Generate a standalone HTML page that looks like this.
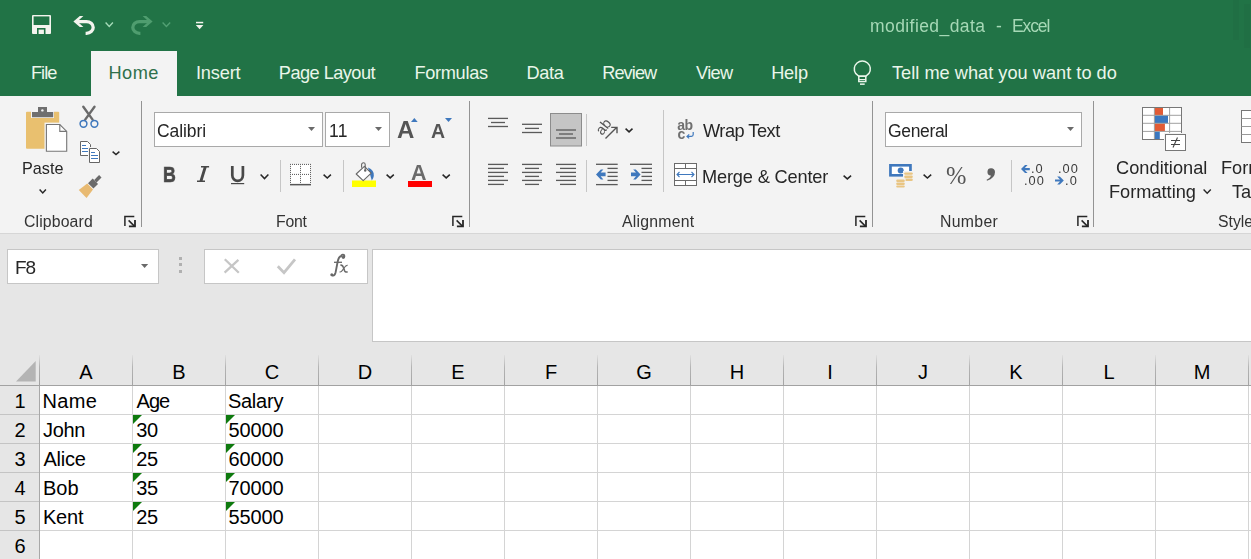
<!DOCTYPE html>
<html><head><meta charset="utf-8"><style>
html,body{margin:0;padding:0}
body{width:1251px;height:559px;overflow:hidden;position:relative;font-family:"Liberation Sans", sans-serif;background:#fff}
body>div,body>svg{position:absolute}
.t{white-space:nowrap;will-change:transform}
svg{overflow:visible}
</style></head><body>
<div style="left:0px;top:0px;width:1251px;height:96px;background:#217346"></div><svg style="left:31px;top:14px;" width="22" height="22" viewBox="31 14 22 22"><rect x="32" y="15" width="19" height="19" rx="1" fill="#f4f4ee"/><rect x="33.6" y="16.4" width="15.8" height="8.6" fill="#217346"/><rect x="37" y="28" width="8.5" height="6" fill="#217346"/><rect x="38.6" y="29.6" width="5.3" height="4.4" fill="#f4f4ee"/></svg><svg style="left:70px;top:12px;" width="30" height="26" viewBox="70 12 30 26"><path d="M73.4 21.5 L79.8 15.9 H83.4 L79 20 V23 L83.4 27.1 H79.8 Z" fill="#f4f4ee"/><path d="M78 21.6 H86.5 A6.7 5.85 0 0 1 86.5 33.3 H85.6" stroke="#f4f4ee" stroke-width="3.3" fill="none"/></svg><svg style="left:103px;top:20px;" width="12.5" height="9" viewBox="103 20 12.5 9"><path d="M105.6 22.6 L109.25 26.4 L112.9 22.6" stroke="#a6dcb9" stroke-width="1.4" fill="none"/></svg><svg style="left:128px;top:12px;" width="30" height="26" viewBox="128 12 30 26"><path d="M152.6 21.5 L146.2 15.9 H142.6 L147 20 V23 L142.6 27.1 H146.2 Z" fill="#4f9d6f"/><path d="M148 21.6 H139.5 A6.7 5.85 0 0 0 139.5 33.3 H140.4" stroke="#4f9d6f" stroke-width="3.3" fill="none"/></svg><svg style="left:160px;top:20px;" width="12.800000000000011" height="9" viewBox="160 20 12.800000000000011 9"><path d="M162.6 22.6 L166.4 26.4 L170.20000000000002 22.6" stroke="#52a073" stroke-width="1.4" fill="none"/></svg><svg style="left:194px;top:19px;" width="12" height="12" viewBox="194 19 12 12"><rect x="196" y="21.8" width="7.2" height="1.5" fill="#f4f4ee"/><path d="M195.8 25 H203.4 L199.6 29.2 Z" fill="#f4f4ee"/></svg><div class="t" id="title" style="left:870.20px;top:17.69px;font-size:17.5px;line-height:17.5px;color:#a6d8b6;letter-spacing:0.417px;">modified_data</div><div class="t" id="title2" style="left:996.00px;top:17.69px;font-size:17.5px;line-height:17.5px;color:#a6d8b6;">-</div><div class="t" id="title3" style="left:1012.20px;top:17.69px;font-size:17.5px;line-height:17.5px;color:#a6d8b6;letter-spacing:-1.125px;">Excel</div><div style="left:1233px;top:0px;width:6px;height:40px;background:#1f6d43;opacity:.6"></div><div style="left:1244px;top:4px;width:6px;height:44px;background:#1f6d43;opacity:.6"></div><div style="left:91px;top:51px;width:86px;height:45px;background:#f3f3f3"></div><div class="t" id="tab0" style="left:31.00px;top:64.09px;font-size:18.2px;line-height:18.2px;color:#eaf6ea;letter-spacing:-1.000px;will-change:auto">File</div><div class="t" id="tab1" style="left:108.40px;top:64.09px;font-size:18.2px;line-height:18.2px;color:#2f704b;letter-spacing:0.500px;will-change:auto">Home</div><div class="t" id="tab2" style="left:196.00px;top:64.09px;font-size:18.2px;line-height:18.2px;color:#eaf6ea;letter-spacing:-0.180px;will-change:auto">Insert</div><div class="t" id="tab3" style="left:278.80px;top:64.09px;font-size:18.2px;line-height:18.2px;color:#eaf6ea;letter-spacing:-0.540px;will-change:auto">Page Layout</div><div class="t" id="tab4" style="left:414.40px;top:64.09px;font-size:18.2px;line-height:18.2px;color:#eaf6ea;letter-spacing:-0.300px;will-change:auto">Formulas</div><div class="t" id="tab5" style="left:526.40px;top:64.09px;font-size:18.2px;line-height:18.2px;color:#eaf6ea;letter-spacing:-0.333px;will-change:auto">Data</div><div class="t" id="tab6" style="left:602.20px;top:64.09px;font-size:18.2px;line-height:18.2px;color:#eaf6ea;letter-spacing:-0.920px;will-change:auto">Review</div><div class="t" id="tab7" style="left:696.00px;top:64.09px;font-size:18.2px;line-height:18.2px;color:#eaf6ea;letter-spacing:-0.667px;will-change:auto">View</div><div class="t" id="tab8" style="left:771.20px;top:64.09px;font-size:18.2px;line-height:18.2px;color:#eaf6ea;letter-spacing:-0.200px;will-change:auto">Help</div><div class="t" id="tab9" style="left:892.00px;top:64.09px;font-size:18.2px;line-height:18.2px;color:#eaf6ea;letter-spacing:0.015px;will-change:auto">Tell me what you want to do</div><svg style="left:850px;top:58px;" width="26" height="30" viewBox="850 58 26 30"><path d="M858.8 76.2 L855.6 73.4 A8 8 0 1 1 869 73.4 L865.8 76.2 Z" stroke="#eaf6ea" stroke-width="1.5" fill="none" stroke-linejoin="round"/><rect x="858.8" y="76.2" width="7" height="5.3" stroke="#eaf6ea" stroke-width="1.5" fill="none"/><path d="M858.8 79.5 H865.8" stroke="#eaf6ea" stroke-width="1"/><rect x="860" y="83.4" width="4.7" height="1.5" fill="#eaf6ea"/></svg><div style="left:0px;top:96px;width:1251px;height:137px;background:#f3f3f3"></div><div style="left:0px;top:233px;width:1251px;height:1px;background:#d6d6d6"></div><div style="left:141px;top:101px;width:1px;height:126px;background:#939393"></div><div style="left:469px;top:101px;width:1px;height:126px;background:#939393"></div><div style="left:872px;top:101px;width:1px;height:126px;background:#939393"></div><div style="left:1093px;top:101px;width:1px;height:126px;background:#939393"></div><svg style="left:22px;top:104px;" width="50" height="52" viewBox="22 104 50 52"><rect x="26" y="111.7" width="33.2" height="37.1" rx="1" fill="#e9c06f"/><rect x="31" y="111" width="23" height="7" fill="#f3f3f3"/><path d="M38 107 H47 V112 H53.2 V117.2 H32 V112 H38 Z" fill="#6f6f6f"/><circle cx="42.4" cy="110.4" r="1.2" fill="#f3f3f3"/><rect x="44.5" y="122.6" width="24" height="30.5" fill="#f3f3f3"/><path d="M46.4 124.5 H59.8 L66.7 131.4 V151.2 H46.4 Z" fill="#fff" stroke="#767676" stroke-width="1.1"/><path d="M59.8 124.5 V131.4 H66.7" fill="none" stroke="#767676" stroke-width="1.1"/></svg><div class="t" id="paste" style="left:22.00px;top:159.79px;font-size:16.2px;line-height:16.2px;color:#262626;">Paste</div><svg style="left:36.5px;top:186.5px;" width="11.5" height="8.5" viewBox="36.5 186.5 11.5 8.5"><path d="M39.1 189.1 L42.25 192.4 L45.4 189.1" stroke="#262626" stroke-width="1.5" fill="none"/></svg><svg style="left:76px;top:104px;" width="24" height="26" viewBox="76 104 24 26"><path d="M83.3 106.8 L92.6 119.6 M94.5 106.8 L85.2 119.6" stroke="#6a6a6a" stroke-width="2.4" stroke-linecap="round"/><circle cx="83.5" cy="123.8" r="3.4" fill="none" stroke="#3f78bd" stroke-width="1.5"/><circle cx="94.4" cy="123.8" r="3.4" fill="none" stroke="#3f78bd" stroke-width="1.5"/></svg><svg style="left:78px;top:139px;" width="24" height="26" viewBox="78 139 24 26"><path d="M80.5 141.5 H87.5 L90.5 144.5 V155.5 H80.5 Z" fill="#fff" stroke="#666" stroke-width="1"/><path d="M82 145.5 H86 M82 148.5 H88.5 M82 151.5 H88" stroke="#3f78bd" stroke-width="1"/><rect x="88" y="147" width="13" height="17" fill="#f3f3f3"/><path d="M89.5 148.5 H96.5 L99.5 151.5 V162.5 H89.5 Z" fill="#fff" stroke="#666" stroke-width="1"/><path d="M91 152.5 H95 M91 155.5 H98 M91 158.5 H98" stroke="#3f78bd" stroke-width="1"/></svg><svg style="left:110.2px;top:149.4px;" width="12.0" height="8.099999999999994" viewBox="110.2 149.4 12.0 8.099999999999994"><path d="M112.8 152.0 L116.2 154.9 L119.60000000000001 152.0" stroke="#262626" stroke-width="1.5" fill="none"/></svg><svg style="left:76px;top:174px;" width="28" height="26" viewBox="76 174 28 26"><g transform="rotate(45 90 186.5)"><rect x="88.4" y="172" width="3.4" height="7" fill="#6a6a6a"/><rect x="86.3" y="179" width="7.6" height="6.6" fill="#6a6a6a"/><path d="M86 186.4 H94.2 L95.6 197 H84.6 Z" fill="#e8ba72"/></g></svg><div class="t" id="clipboard" style="left:23.80px;top:214.13px;font-size:15.8px;line-height:15.8px;color:#333;letter-spacing:0.137px;">Clipboard</div><svg style="left:123px;top:214.5px;" width="15" height="15" viewBox="123 214.5 15 15"><path d="M124.9 225.5 V215.9 H134.3" stroke="#262626" stroke-width="1.5" fill="none"/><path d="M128.6 219.9 L134.6 225.9" stroke="#262626" stroke-width="1.5" fill="none"/><path d="M128.9 225.8 H135 V219.6" stroke="#262626" stroke-width="1.8" fill="none"/></svg><div style="left:154px;top:112px;width:169px;height:35px;background:#fff;box-sizing:border-box;border:1px solid #a9a9a9"></div><div class="t" id="calibri" style="left:156.60px;top:122.69px;font-size:17.5px;line-height:17.5px;color:#262626;letter-spacing:-0.083px;">Calibri</div><svg style="left:307px;top:126px;" width="9" height="6" viewBox="307 126 9 6"><path d="M308 127 H315 L311.5 131 Z" fill="#6a6a6a"/></svg><div style="left:325px;top:112px;width:65px;height:35px;background:#fff;box-sizing:border-box;border:1px solid #a9a9a9"></div><div class="t" id="size" style="left:328.80px;top:122.69px;font-size:17.5px;line-height:17.5px;color:#262626;letter-spacing:0.300px;">11</div><svg style="left:374px;top:126px;" width="9" height="6" viewBox="374 126 9 6"><path d="M375 127 H382 L378.5 131 Z" fill="#6a6a6a"/></svg><div class="t" id="growA" style="left:397.00px;top:118.18px;font-size:24px;line-height:24px;color:#555;font-weight:bold">A</div><svg style="left:409px;top:116px;" width="10" height="8" viewBox="409 116 10 8"><path d="M411 122 H417.7 L414.35 118 Z" fill="#3f78bd"/></svg><div class="t" id="shrinkA" style="left:431.40px;top:121.99px;font-size:19.5px;line-height:19.5px;color:#555;font-weight:bold">A</div><svg style="left:443px;top:116px;" width="11" height="8" viewBox="443 116 11 8"><path d="M445 118 H452 L448.5 122 Z" fill="#3f78bd"/></svg><div class="t" id="bold" style="left:162.60px;top:164.31px;font-size:22.2px;line-height:22.2px;color:#484848;font-weight:bold;transform:scaleX(0.8);transform-origin:0 0;-webkit-text-stroke:0.6px #484848">B</div><svg style="left:195px;top:164px;" width="16" height="20" viewBox="195 164 16 20"><path d="M201 166 H209.1 V167.6 H206.6 L202.6 180.4 H205 V182 H197 V180.4 H199.6 L203.6 167.6 H201 Z" fill="#484848"/></svg><svg style="left:229px;top:164px;" width="17" height="21" viewBox="229 164 17 21"><path d="M232.3 166 V175.3 A5.3 5.6 0 0 0 242.9 175.3 V166" stroke="#484848" stroke-width="2.7" fill="none"/><rect x="231" y="183" width="13.2" height="1.2" fill="#484848"/></svg><svg style="left:257.7px;top:171.8px;" width="13.0" height="9.199999999999989" viewBox="257.7 171.8 13.0 9.199999999999989"><path d="M260.3 174.4 L264.2 178.4 L268.09999999999997 174.4" stroke="#262626" stroke-width="1.5" fill="none"/></svg><div style="left:280px;top:160px;width:1px;height:32px;background:#c6c6c6"></div><svg style="left:288px;top:162px;" width="26" height="26" viewBox="288 162 26 26"><rect x="290.5" y="164.5" width="20.5" height="20" fill="#fff"/><g fill="#555"><rect x="290" y="163.9" width="1" height="1"/><rect x="290" y="173.9" width="1" height="1"/><rect x="292" y="163.9" width="1" height="1"/><rect x="292" y="173.9" width="1" height="1"/><rect x="294" y="163.9" width="1" height="1"/><rect x="294" y="173.9" width="1" height="1"/><rect x="296" y="163.9" width="1" height="1"/><rect x="296" y="173.9" width="1" height="1"/><rect x="298" y="163.9" width="1" height="1"/><rect x="298" y="173.9" width="1" height="1"/><rect x="300" y="163.9" width="1" height="1"/><rect x="300" y="173.9" width="1" height="1"/><rect x="302" y="163.9" width="1" height="1"/><rect x="302" y="173.9" width="1" height="1"/><rect x="304" y="163.9" width="1" height="1"/><rect x="304" y="173.9" width="1" height="1"/><rect x="306" y="163.9" width="1" height="1"/><rect x="306" y="173.9" width="1" height="1"/><rect x="308" y="163.9" width="1" height="1"/><rect x="308" y="173.9" width="1" height="1"/><rect x="310" y="163.9" width="1" height="1"/><rect x="310" y="173.9" width="1" height="1"/><rect x="290" y="165.9" width="1" height="1"/><rect x="300" y="165.9" width="1" height="1"/><rect x="310" y="165.9" width="1" height="1"/><rect x="290" y="167.9" width="1" height="1"/><rect x="300" y="167.9" width="1" height="1"/><rect x="310" y="167.9" width="1" height="1"/><rect x="290" y="169.9" width="1" height="1"/><rect x="300" y="169.9" width="1" height="1"/><rect x="310" y="169.9" width="1" height="1"/><rect x="290" y="171.9" width="1" height="1"/><rect x="300" y="171.9" width="1" height="1"/><rect x="310" y="171.9" width="1" height="1"/><rect x="290" y="175.9" width="1" height="1"/><rect x="300" y="175.9" width="1" height="1"/><rect x="310" y="175.9" width="1" height="1"/><rect x="290" y="177.9" width="1" height="1"/><rect x="300" y="177.9" width="1" height="1"/><rect x="310" y="177.9" width="1" height="1"/><rect x="290" y="179.9" width="1" height="1"/><rect x="300" y="179.9" width="1" height="1"/><rect x="310" y="179.9" width="1" height="1"/><rect x="290" y="181.9" width="1" height="1"/><rect x="300" y="181.9" width="1" height="1"/><rect x="310" y="181.9" width="1" height="1"/></g><rect x="290" y="183.9" width="21" height="1.5" fill="#555"/></svg><svg style="left:321px;top:172.1px;" width="12.5" height="8.599999999999994" viewBox="321 172.1 12.5 8.599999999999994"><path d="M323.6 174.7 L327.25 178.1 L330.9 174.7" stroke="#262626" stroke-width="1.5" fill="none"/></svg><div style="left:343px;top:160px;width:1px;height:32px;background:#c6c6c6"></div><svg style="left:350px;top:160px;" width="28" height="30" viewBox="350 160 28 30"><rect x="352" y="180.5" width="24" height="6.5" fill="#ffff00"/><path d="M368 167.5 Q374.5 170 373.8 176 Q373.5 178.5 371.8 180.5 Z" fill="#3f78bd"/><path d="M356.2 174 L364.4 166.4 L371.2 173.2 L363.2 180.6 Z" fill="#fff" stroke="#666" stroke-width="1.1" stroke-linejoin="round"/><path d="M361.6 167.8 V164.6 A1.8 1.8 0 0 1 365.2 164.6 V170" fill="none" stroke="#666" stroke-width="1.1"/><circle cx="365.2" cy="170.5" r="1.2" fill="#666"/></svg><svg style="left:384px;top:172px;" width="12.399999999999977" height="8.5" viewBox="384 172 12.399999999999977 8.5"><path d="M386.6 174.6 L390.2 177.9 L393.79999999999995 174.6" stroke="#262626" stroke-width="1.5" fill="none"/></svg><div class="t" id="fontA" style="left:411.20px;top:163.30px;font-size:21.5px;line-height:21.5px;color:#6a6a6a;font-weight:bold">A</div><div style="left:408px;top:181px;width:24px;height:6px;background:#ff0000"></div><svg style="left:440px;top:172px;" width="12.399999999999977" height="8.5" viewBox="440 172 12.399999999999977 8.5"><path d="M442.6 174.6 L446.2 177.9 L449.79999999999995 174.6" stroke="#262626" stroke-width="1.5" fill="none"/></svg><div class="t" id="fontlbl" style="left:276.20px;top:214.13px;font-size:15.8px;line-height:15.8px;color:#333;letter-spacing:-0.267px;">Font</div><svg style="left:451px;top:214.5px;" width="15" height="15" viewBox="451 214.5 15 15"><path d="M452.9 225.5 V215.9 H462.3" stroke="#262626" stroke-width="1.5" fill="none"/><path d="M456.6 219.9 L462.6 225.9" stroke="#262626" stroke-width="1.5" fill="none"/><path d="M456.9 225.8 H463 V219.6" stroke="#262626" stroke-width="1.8" fill="none"/></svg><svg style="left:480px;top:110px;" width="110" height="40" viewBox="480 110 110 40"><rect x="488" y="117.75" width="20" height="1.3" fill="#5a5a5a"/><rect x="491" y="121.85" width="14" height="1.3" fill="#5a5a5a"/><rect x="488" y="125.85" width="20" height="1.3" fill="#5a5a5a"/><rect x="522" y="123.64999999999999" width="20" height="1.3" fill="#5a5a5a"/><rect x="525" y="127.75" width="14" height="1.3" fill="#5a5a5a"/><rect x="522" y="131.85" width="20" height="1.3" fill="#5a5a5a"/><rect x="550.5" y="113.5" width="31" height="32.5" fill="#c5c5c5" stroke="#8c8c8c" stroke-width="1"/><rect x="556" y="129.35" width="20" height="1.3" fill="#5a5a5a"/><rect x="559" y="133.35" width="14" height="1.3" fill="#5a5a5a"/><rect x="556" y="137.35" width="20" height="1.3" fill="#5a5a5a"/></svg><div style="left:586px;top:114px;width:1px;height:32px;background:#c6c6c6"></div><svg style="left:594px;top:116px;" width="28" height="26" viewBox="594 116 28 26"><text x="0" y="0" font-family="Liberation Sans" font-size="14.5" fill="#555" transform="translate(602.2 136) rotate(-52)">ab</text><path d="M605.5 138.4 L616.8 127.3 M611.2 127.4 H617 V133.2" stroke="#555" stroke-width="1.4" fill="none"/></svg><svg style="left:623.3px;top:126.30000000000001px;" width="12.100000000000023" height="8.5" viewBox="623.3 126.30000000000001 12.100000000000023 8.5"><path d="M625.9 128.9 L629.3499999999999 132.20000000000002 L632.8 128.9" stroke="#262626" stroke-width="1.5" fill="none"/></svg><svg style="left:484px;top:160px;" width="100" height="30" viewBox="484 160 100 30"><rect x="488" y="163.75" width="20" height="1.3" fill="#5a5a5a"/><rect x="488" y="167.75" width="16" height="1.3" fill="#5a5a5a"/><rect x="488" y="171.75" width="20" height="1.3" fill="#5a5a5a"/><rect x="488" y="175.75" width="16" height="1.3" fill="#5a5a5a"/><rect x="488" y="179.75" width="20" height="1.3" fill="#5a5a5a"/><rect x="488" y="183.75" width="16" height="1.3" fill="#5a5a5a"/><rect x="522" y="163.75" width="20" height="1.3" fill="#5a5a5a"/><rect x="525" y="167.75" width="14" height="1.3" fill="#5a5a5a"/><rect x="522" y="171.75" width="20" height="1.3" fill="#5a5a5a"/><rect x="525" y="175.75" width="14" height="1.3" fill="#5a5a5a"/><rect x="522" y="179.75" width="20" height="1.3" fill="#5a5a5a"/><rect x="525" y="183.75" width="14" height="1.3" fill="#5a5a5a"/><rect x="556" y="163.75" width="20" height="1.3" fill="#5a5a5a"/><rect x="560" y="167.75" width="16" height="1.3" fill="#5a5a5a"/><rect x="556" y="171.75" width="20" height="1.3" fill="#5a5a5a"/><rect x="560" y="175.75" width="16" height="1.3" fill="#5a5a5a"/><rect x="556" y="179.75" width="20" height="1.3" fill="#5a5a5a"/><rect x="560" y="183.75" width="16" height="1.3" fill="#5a5a5a"/></svg><div style="left:586px;top:160px;width:1px;height:32px;background:#c6c6c6"></div><svg style="left:594px;top:160px;" width="62" height="30" viewBox="594 160 62 30"><rect x="596" y="163.65" width="21.700000000000045" height="1.3" fill="#5a5a5a"/><rect x="596" y="183.95" width="21.700000000000045" height="1.3" fill="#5a5a5a"/><rect x="607.5" y="167.75" width="10.200000000000045" height="1.3" fill="#5a5a5a"/><rect x="607.5" y="171.75" width="10.200000000000045" height="1.3" fill="#5a5a5a"/><rect x="607.5" y="175.75" width="10.200000000000045" height="1.3" fill="#5a5a5a"/><rect x="607.5" y="179.75" width="10.200000000000045" height="1.3" fill="#5a5a5a"/><path d="M596 174.4 L600.8 169.4 H603.4 L600.6 172.6 H605.6 V176.2 H600.6 L603.4 179.4 H600.8 Z" fill="#3f78bd"/><rect x="630" y="163.65" width="22" height="1.3" fill="#5a5a5a"/><rect x="630" y="183.95" width="22" height="1.3" fill="#5a5a5a"/><rect x="641.5" y="167.75" width="10.5" height="1.3" fill="#5a5a5a"/><rect x="641.5" y="171.75" width="10.5" height="1.3" fill="#5a5a5a"/><rect x="641.5" y="175.75" width="10.5" height="1.3" fill="#5a5a5a"/><rect x="641.5" y="179.75" width="10.5" height="1.3" fill="#5a5a5a"/><path d="M640.6 174.4 L635.8 169.4 H633.2 L636 172.6 H631 V176.2 H636 L633.2 179.4 H635.8 Z" fill="#3f78bd"/></svg><div style="left:663px;top:110px;width:1px;height:82px;background:#c6c6c6"></div><svg style="left:675px;top:118px;" width="22" height="22" viewBox="675 118 22 22"><text x="677.2" y="130.2" font-family="Liberation Sans" font-size="14" font-weight="bold" fill="#707070" letter-spacing="-0.4">ab</text><text x="677.4" y="138.6" font-family="Liberation Sans" font-size="14" font-weight="bold" fill="#707070">c</text><path d="M693.2 132 V134.6 Q693.2 136.4 691.4 136.4 H687.2 M689.2 134.4 L687 136.4 L689.2 138.4" stroke="#3f78bd" stroke-width="1.2" fill="none"/></svg><div class="t" id="wrap" style="left:703.00px;top:122.09px;font-size:18.2px;line-height:18.2px;color:#262626;letter-spacing:-0.500px;">Wrap Text</div><svg style="left:672px;top:161px;" width="28" height="28" viewBox="672 161 28 28"><rect x="674.5" y="163.5" width="22" height="22" fill="#fff" stroke="#6a6a6a" stroke-width="1"/><path d="M674.5 168.5 H696.5 M674.5 180.5 H696.5 M685.5 163.5 V168.5 M685.5 180.5 V185.5" stroke="#6a6a6a" stroke-width="1"/><path d="M677 174.5 H694 M679.5 172 L677 174.5 L679.5 177 M691.5 172 L694 174.5 L691.5 177" stroke="#3f78bd" stroke-width="1.1" fill="none"/></svg><div class="t" id="merge" style="left:702.00px;top:167.59px;font-size:18.2px;line-height:18.2px;color:#262626;letter-spacing:-0.154px;">Merge &amp; Center</div><svg style="left:841px;top:172.5px;" width="12.700000000000045" height="8.5" viewBox="841 172.5 12.700000000000045 8.5"><path d="M843.6 175.1 L847.35 178.4 L851.1 175.1" stroke="#262626" stroke-width="1.5" fill="none"/></svg><div class="t" id="alignlbl" style="left:622.40px;top:214.13px;font-size:15.8px;line-height:15.8px;color:#333;letter-spacing:0.225px;">Alignment</div><svg style="left:854px;top:214.5px;" width="15" height="15" viewBox="854 214.5 15 15"><path d="M855.9 225.5 V215.9 H865.3" stroke="#262626" stroke-width="1.5" fill="none"/><path d="M859.6 219.9 L865.6 225.9" stroke="#262626" stroke-width="1.5" fill="none"/><path d="M859.9 225.8 H866 V219.6" stroke="#262626" stroke-width="1.8" fill="none"/></svg><div style="left:885px;top:112px;width:197px;height:35px;background:#fff;box-sizing:border-box;border:1px solid #a9a9a9"></div><div class="t" id="general" style="left:887.80px;top:122.89px;font-size:17.5px;line-height:17.5px;color:#262626;letter-spacing:-0.350px;">General</div><svg style="left:1066px;top:126px;" width="9" height="6" viewBox="1066 126 9 6"><path d="M1067 127 H1074 L1070.5 131 Z" fill="#6a6a6a"/></svg><svg style="left:886px;top:162px;" width="30" height="28" viewBox="886 162 30 28"><rect x="889.1" y="164" width="22.7" height="12.6" fill="#3f78bd"/><rect x="891.8" y="166.6" width="17.3" height="7.4" fill="#fff"/><circle cx="900.7" cy="170.4" r="3" fill="#3f78bd"/><rect x="903" y="171" width="11.5" height="11.5" fill="#f3f3f3"/><g fill="#e9c583"><rect x="904.2" y="172.4" width="8.6" height="2.4" rx="1.2"/><rect x="904.2" y="175.5" width="8.6" height="2.4" rx="1.2"/><rect x="904.2" y="178.6" width="8.6" height="2.4" rx="1.2"/><rect x="895.2" y="178.6" width="10.4" height="9.4" fill="#f3f3f3"/><rect x="896.2" y="179.6" width="8.6" height="2.4" rx="1.2"/><rect x="896.2" y="182.6" width="8.6" height="2.4" rx="1.2"/><rect x="896.2" y="185.4" width="8.6" height="2.2" rx="1.1"/></g></svg><svg style="left:921px;top:172.2px;" width="12.799999999999955" height="8.700000000000017" viewBox="921 172.2 12.799999999999955 8.700000000000017"><path d="M923.6 174.79999999999998 L927.4 178.3 L931.1999999999999 174.79999999999998" stroke="#262626" stroke-width="1.5" fill="none"/></svg><div class="t" id="pct" style="left:946.00px;top:163.76px;font-size:24.5px;line-height:24.5px;color:#555;font-family:'Liberation Serif',serif">%</div><svg style="left:984px;top:166px;" width="14" height="18" viewBox="984 166 14 18"><path d="M991.2 168.3 A3.6 3.6 0 0 1 995 172 Q995 178 987 180.8 L986.6 179.8 Q990.6 177.8 990.8 175.4 A3.5 3.5 0 0 1 991.2 168.3 Z" fill="#606060"/></svg><div style="left:1011px;top:160px;width:1px;height:32px;background:#c6c6c6"></div><div class="t" id="d1" style="left:1031.00px;top:162.66px;font-size:12.8px;line-height:12.8px;color:#3c3c3c;letter-spacing:0.900px;">.0</div><div class="t" id="d2" style="left:1023.80px;top:174.66px;font-size:12.8px;line-height:12.8px;color:#3c3c3c;letter-spacing:1.000px;">.00</div><div class="t" id="d3" style="left:1057.60px;top:162.66px;font-size:12.8px;line-height:12.8px;color:#3c3c3c;letter-spacing:1.000px;">.00</div><div class="t" id="d4" style="left:1065.20px;top:174.66px;font-size:12.8px;line-height:12.8px;color:#3c3c3c;letter-spacing:1.200px;">.0</div><svg style="left:1018px;top:162px;" width="62" height="26" viewBox="1018 162 62 26"><path d="M1021 169 L1025 165.1 H1027.6 L1024.8 168 H1029.8 V170.2 H1024.8 L1027.6 173 H1025 Z" fill="#3f78bd"/><path d="M1063.8 180.5 L1059.8 176.6 H1057.2 L1060 179.4 H1055 V181.6 H1060 L1057.2 184.4 H1059.8 Z" fill="#3f78bd"/></svg><div class="t" id="numlbl" style="left:940.00px;top:214.13px;font-size:15.8px;line-height:15.8px;color:#333;letter-spacing:0.340px;">Number</div><svg style="left:1075.5px;top:214.5px;" width="15" height="15" viewBox="1075.5 214.5 15 15"><path d="M1077.4 225.5 V215.9 H1086.8" stroke="#262626" stroke-width="1.5" fill="none"/><path d="M1081.1 219.9 L1087.1 225.9" stroke="#262626" stroke-width="1.5" fill="none"/><path d="M1081.4 225.8 H1087.5 V219.6" stroke="#262626" stroke-width="1.8" fill="none"/></svg><svg style="left:1140px;top:105px;" width="50" height="48" viewBox="1140 105 50 48"><rect x="1142.5" y="107.5" width="39" height="32" fill="#fff"/><rect x="1154.4" y="107.5" width="8.6" height="7.8" fill="#e25b35"/><rect x="1154.4" y="115.3" width="13.6" height="8" fill="#3b78c0"/><rect x="1154.4" y="123.3" width="10.5" height="8.1" fill="#e25b35"/><rect x="1154.4" y="131.4" width="5.4" height="8.1" fill="#3b78c0"/><path d="M1142.5 115.3 H1181.5 M1142.5 123.3 H1181.5 M1142.5 131.4 H1181.5 M1154.4 107.5 V139.5 M1169.6 107.5 V139.5" stroke="#a0a0a0" stroke-width="1"/><rect x="1142.5" y="107.5" width="39" height="32" fill="none" stroke="#777" stroke-width="1"/><rect x="1164" y="133" width="23" height="19" fill="#f3f3f3"/><rect x="1165.5" y="134.5" width="20" height="16" fill="#fff" stroke="#777" stroke-width="1"/><path d="M1171 140.5 H1180 M1171 144.5 H1180 M1177.5 137.5 L1173 147.5" stroke="#444" stroke-width="1.1"/></svg><div class="t" id="cond" style="left:1116.00px;top:159.09px;font-size:18.2px;line-height:18.2px;color:#262626;letter-spacing:0.040px;">Conditional</div><div class="t" id="fmtg" style="left:1109.00px;top:182.69px;font-size:18.2px;line-height:18.2px;color:#262626;">Formatting</div><svg style="left:1201px;top:187.2px;" width="12.400000000000091" height="8.800000000000011" viewBox="1201 187.2 12.400000000000091 8.800000000000011"><path d="M1203.6 189.79999999999998 L1207.2 193.4 L1210.8000000000002 189.79999999999998" stroke="#262626" stroke-width="1.4" fill="none"/></svg><div class="t" id="forr" style="left:1221.40px;top:159.09px;font-size:18.2px;line-height:18.2px;color:#262626;">Format as</div><div class="t" id="tal" style="left:1232.00px;top:182.69px;font-size:18.2px;line-height:18.2px;color:#262626;">Table</div><svg style="left:1239px;top:105px;" width="12" height="40" viewBox="1239 105 12 40"><rect x="1241.5" y="110.5" width="20" height="32" fill="#fff" stroke="#777" stroke-width="1"/><path d="M1241.5 118.5 H1251 M1241.5 126.5 H1251 M1241.5 134.5 H1251" stroke="#999" stroke-width="1"/></svg><div class="t" id="stylelbl" style="left:1218.00px;top:214.13px;font-size:15.8px;line-height:15.8px;color:#333;">Styles</div><div style="left:0px;top:234px;width:1251px;height:123px;background:#e6e6e6"></div><div style="left:7px;top:249px;width:152px;height:35px;background:#fff;box-sizing:border-box;border:1px solid #c6c6c6"></div><div class="t" id="f8" style="left:14.60px;top:258.02px;font-size:19px;line-height:19px;color:#262626;letter-spacing:-1.100px;">F8</div><svg style="left:139.8px;top:263px;" width="9.199999999999989" height="6" viewBox="139.8 263 9.199999999999989 6"><path d="M140.8 264 H148 L144.4 268 Z" fill="#6a6a6a"/></svg><div style="left:179px;top:256.7px;width:3px;height:3px;background:#b0b0b0"></div><div style="left:179px;top:263.2px;width:3px;height:3px;background:#b0b0b0"></div><div style="left:179px;top:269.7px;width:3px;height:3px;background:#b0b0b0"></div><div style="left:204px;top:249px;width:164px;height:35px;background:#fff;box-sizing:border-box;border:1px solid #c6c6c6"></div><svg style="left:222px;top:256px;" width="20" height="20" viewBox="222 256 20 20"><path d="M224.8 259.2 L238.8 272.8 M238.4 259.8 L224.6 272.6" stroke="#c6c6c6" stroke-width="2.3"/></svg><svg style="left:276px;top:256px;" width="22" height="20" viewBox="276 256 22 20"><path d="M277.8 266.2 L284 272.6 L295 259.4" stroke="#c6c6c6" stroke-width="2.8" fill="none"/></svg><svg style="left:326px;top:252px;" width="26" height="28" viewBox="326 252 26 28"><path d="M343.6 257.6 A1.6 1.6 0 1 0 341.2 256 Q338.6 256.6 337.6 262 L335.6 272.4 Q334.8 276 332.6 275.6" stroke="#686868" stroke-width="1.9" fill="none" stroke-linecap="round"/><circle cx="343.2" cy="257.2" r="1.5" fill="#686868"/><circle cx="331.8" cy="274.8" r="1.5" fill="#686868"/><path d="M334 262.3 H342" stroke="#686868" stroke-width="1.3"/><path d="M340.4 265.2 Q342.6 264.6 343.4 267.4 L344.6 270.8 Q345.6 272.8 347.6 271.6" stroke="#686868" stroke-width="1.6" fill="none"/><path d="M347.6 265.4 Q346 265 344.2 267.8 L342.4 270.4 Q341 272.4 339.6 271.8" stroke="#686868" stroke-width="1.1" fill="none"/></svg><div style="left:372px;top:249px;width:879px;height:93px;background:#fff;box-sizing:border-box;border:1px solid #c6c6c6;border-right:none"></div><div style="left:0px;top:357px;width:1251px;height:202px;background:#fff"></div><div style="left:0px;top:357px;width:1251px;height:28px;background:#e6e6e6"></div><div style="left:0px;top:357px;width:39px;height:202px;background:#e6e6e6"></div><div style="left:132px;top:355px;width:1px;height:30px;background:linear-gradient(#e0e0e0,#b4b4b4 40%,#a4a4a4)"></div><div style="left:132px;top:386px;width:1px;height:173px;background:#d4d4d4"></div><div style="left:225px;top:355px;width:1px;height:30px;background:linear-gradient(#e0e0e0,#b4b4b4 40%,#a4a4a4)"></div><div style="left:225px;top:386px;width:1px;height:173px;background:#d4d4d4"></div><div style="left:318px;top:355px;width:1px;height:30px;background:linear-gradient(#e0e0e0,#b4b4b4 40%,#a4a4a4)"></div><div style="left:318px;top:386px;width:1px;height:173px;background:#d4d4d4"></div><div style="left:411px;top:355px;width:1px;height:30px;background:linear-gradient(#e0e0e0,#b4b4b4 40%,#a4a4a4)"></div><div style="left:411px;top:386px;width:1px;height:173px;background:#d4d4d4"></div><div style="left:504px;top:355px;width:1px;height:30px;background:linear-gradient(#e0e0e0,#b4b4b4 40%,#a4a4a4)"></div><div style="left:504px;top:386px;width:1px;height:173px;background:#d4d4d4"></div><div style="left:597px;top:355px;width:1px;height:30px;background:linear-gradient(#e0e0e0,#b4b4b4 40%,#a4a4a4)"></div><div style="left:597px;top:386px;width:1px;height:173px;background:#d4d4d4"></div><div style="left:690px;top:355px;width:1px;height:30px;background:linear-gradient(#e0e0e0,#b4b4b4 40%,#a4a4a4)"></div><div style="left:690px;top:386px;width:1px;height:173px;background:#d4d4d4"></div><div style="left:783px;top:355px;width:1px;height:30px;background:linear-gradient(#e0e0e0,#b4b4b4 40%,#a4a4a4)"></div><div style="left:783px;top:386px;width:1px;height:173px;background:#d4d4d4"></div><div style="left:876px;top:355px;width:1px;height:30px;background:linear-gradient(#e0e0e0,#b4b4b4 40%,#a4a4a4)"></div><div style="left:876px;top:386px;width:1px;height:173px;background:#d4d4d4"></div><div style="left:969px;top:355px;width:1px;height:30px;background:linear-gradient(#e0e0e0,#b4b4b4 40%,#a4a4a4)"></div><div style="left:969px;top:386px;width:1px;height:173px;background:#d4d4d4"></div><div style="left:1062px;top:355px;width:1px;height:30px;background:linear-gradient(#e0e0e0,#b4b4b4 40%,#a4a4a4)"></div><div style="left:1062px;top:386px;width:1px;height:173px;background:#d4d4d4"></div><div style="left:1155px;top:355px;width:1px;height:30px;background:linear-gradient(#e0e0e0,#b4b4b4 40%,#a4a4a4)"></div><div style="left:1155px;top:386px;width:1px;height:173px;background:#d4d4d4"></div><div style="left:1248px;top:355px;width:1px;height:30px;background:linear-gradient(#e0e0e0,#b4b4b4 40%,#a4a4a4)"></div><div style="left:1248px;top:386px;width:1px;height:173px;background:#d4d4d4"></div><div style="left:39px;top:355px;width:1px;height:30px;background:linear-gradient(#e0e0e0,#b0b0b0 40%,#a0a0a0)"></div><div style="left:39px;top:385px;width:1px;height:174px;background:#a8a8a8"></div><div style="left:0px;top:385px;width:1251px;height:1px;background:#a2a2a2"></div><div style="left:40px;top:414px;width:1211px;height:1px;background:#d4d4d4"></div><div style="left:0px;top:414px;width:39px;height:1px;background:#c4c4c4"></div><div style="left:40px;top:443px;width:1211px;height:1px;background:#d4d4d4"></div><div style="left:0px;top:443px;width:39px;height:1px;background:#c4c4c4"></div><div style="left:40px;top:472px;width:1211px;height:1px;background:#d4d4d4"></div><div style="left:0px;top:472px;width:39px;height:1px;background:#c4c4c4"></div><div style="left:40px;top:501px;width:1211px;height:1px;background:#d4d4d4"></div><div style="left:0px;top:501px;width:39px;height:1px;background:#c4c4c4"></div><div style="left:40px;top:530px;width:1211px;height:1px;background:#d4d4d4"></div><div style="left:0px;top:530px;width:39px;height:1px;background:#c4c4c4"></div><svg style="left:14px;top:359px;" width="24" height="25" viewBox="14 359 24 25"><path d="M35.7 361 V381.5 H16 Z" fill="#b4b4b4"/></svg><div class="t" style="left:46.0px;width:80px;text-align:center;top:361.57px;font-size:20px;line-height:20px;color:#000;will-change:auto">A</div><div class="t" style="left:139.0px;width:80px;text-align:center;top:361.57px;font-size:20px;line-height:20px;color:#000;will-change:auto">B</div><div class="t" style="left:232.0px;width:80px;text-align:center;top:361.57px;font-size:20px;line-height:20px;color:#000;will-change:auto">C</div><div class="t" style="left:325.0px;width:80px;text-align:center;top:361.57px;font-size:20px;line-height:20px;color:#000;will-change:auto">D</div><div class="t" style="left:418.0px;width:80px;text-align:center;top:361.57px;font-size:20px;line-height:20px;color:#000;will-change:auto">E</div><div class="t" style="left:511.0px;width:80px;text-align:center;top:361.57px;font-size:20px;line-height:20px;color:#000;will-change:auto">F</div><div class="t" style="left:604.0px;width:80px;text-align:center;top:361.57px;font-size:20px;line-height:20px;color:#000;will-change:auto">G</div><div class="t" style="left:697.0px;width:80px;text-align:center;top:361.57px;font-size:20px;line-height:20px;color:#000;will-change:auto">H</div><div class="t" style="left:790.0px;width:80px;text-align:center;top:361.57px;font-size:20px;line-height:20px;color:#000;will-change:auto">I</div><div class="t" style="left:883.0px;width:80px;text-align:center;top:361.57px;font-size:20px;line-height:20px;color:#000;will-change:auto">J</div><div class="t" style="left:976.0px;width:80px;text-align:center;top:361.57px;font-size:20px;line-height:20px;color:#000;will-change:auto">K</div><div class="t" style="left:1069.0px;width:80px;text-align:center;top:361.57px;font-size:20px;line-height:20px;color:#000;will-change:auto">L</div><div class="t" style="left:1162.0px;width:80px;text-align:center;top:361.57px;font-size:20px;line-height:20px;color:#000;will-change:auto">M</div><div class="t" style="left:0px;width:40px;text-align:center;top:390.57px;font-size:20px;line-height:20px;color:#000;will-change:auto">1</div><div class="t" style="left:0px;width:40px;text-align:center;top:419.57px;font-size:20px;line-height:20px;color:#000;will-change:auto">2</div><div class="t" style="left:0px;width:40px;text-align:center;top:448.57px;font-size:20px;line-height:20px;color:#000;will-change:auto">3</div><div class="t" style="left:0px;width:40px;text-align:center;top:477.57px;font-size:20px;line-height:20px;color:#000;will-change:auto">4</div><div class="t" style="left:0px;width:40px;text-align:center;top:506.57px;font-size:20px;line-height:20px;color:#000;will-change:auto">5</div><div class="t" style="left:0px;width:40px;text-align:center;top:535.57px;font-size:20px;line-height:20px;color:#000;will-change:auto">6</div><div class="t" id="c00" style="left:42.50px;top:390.57px;font-size:20px;line-height:20px;color:#000;letter-spacing:0.333px;will-change:auto">Name</div><div class="t" id="c01" style="left:136.60px;top:390.57px;font-size:20px;line-height:20px;color:#000;letter-spacing:-1.000px;will-change:auto">Age</div><div class="t" id="c02" style="left:227.90px;top:390.57px;font-size:20px;line-height:20px;color:#000;letter-spacing:-0.240px;will-change:auto">Salary</div><div class="t" id="c10" style="left:43.00px;top:419.57px;font-size:20px;line-height:20px;color:#000;letter-spacing:-0.333px;will-change:auto">John</div><div class="t" id="c11" style="left:136.20px;top:419.57px;font-size:20px;line-height:20px;color:#000;letter-spacing:-0.200px;will-change:auto">30</div><svg style="left:132px;top:414px;" width="12" height="12" viewBox="132 414 12 12"><path d="M133 415 H142 L133 424 Z" fill="#0e7a0e"/></svg><div class="t" id="c12" style="left:228.50px;top:419.57px;font-size:20px;line-height:20px;color:#000;letter-spacing:-0.100px;will-change:auto">50000</div><svg style="left:225px;top:414px;" width="12" height="12" viewBox="225 414 12 12"><path d="M226 415 H235 L226 424 Z" fill="#0e7a0e"/></svg><div class="t" id="c20" style="left:43.40px;top:448.57px;font-size:20px;line-height:20px;color:#000;letter-spacing:-0.200px;will-change:auto">Alice</div><div class="t" id="c21" style="left:136.20px;top:448.57px;font-size:20px;line-height:20px;color:#000;letter-spacing:-0.200px;will-change:auto">25</div><svg style="left:132px;top:443px;" width="12" height="12" viewBox="132 443 12 12"><path d="M133 444 H142 L133 453 Z" fill="#0e7a0e"/></svg><div class="t" id="c22" style="left:228.50px;top:448.57px;font-size:20px;line-height:20px;color:#000;letter-spacing:-0.100px;will-change:auto">60000</div><svg style="left:225px;top:443px;" width="12" height="12" viewBox="225 443 12 12"><path d="M226 444 H235 L226 453 Z" fill="#0e7a0e"/></svg><div class="t" id="c30" style="left:42.90px;top:477.57px;font-size:20px;line-height:20px;color:#000;letter-spacing:0.100px;will-change:auto">Bob</div><div class="t" id="c31" style="left:136.20px;top:477.57px;font-size:20px;line-height:20px;color:#000;letter-spacing:-0.200px;will-change:auto">35</div><svg style="left:132px;top:472px;" width="12" height="12" viewBox="132 472 12 12"><path d="M133 473 H142 L133 482 Z" fill="#0e7a0e"/></svg><div class="t" id="c32" style="left:228.50px;top:477.57px;font-size:20px;line-height:20px;color:#000;letter-spacing:-0.100px;will-change:auto">70000</div><svg style="left:225px;top:472px;" width="12" height="12" viewBox="225 472 12 12"><path d="M226 473 H235 L226 482 Z" fill="#0e7a0e"/></svg><div class="t" id="c40" style="left:42.90px;top:506.57px;font-size:20px;line-height:20px;color:#000;letter-spacing:-0.200px;will-change:auto">Kent</div><div class="t" id="c41" style="left:136.20px;top:506.57px;font-size:20px;line-height:20px;color:#000;letter-spacing:-0.200px;will-change:auto">25</div><svg style="left:132px;top:501px;" width="12" height="12" viewBox="132 501 12 12"><path d="M133 502 H142 L133 511 Z" fill="#0e7a0e"/></svg><div class="t" id="c42" style="left:228.50px;top:506.57px;font-size:20px;line-height:20px;color:#000;letter-spacing:-0.100px;will-change:auto">55000</div><svg style="left:225px;top:501px;" width="12" height="12" viewBox="225 501 12 12"><path d="M226 502 H235 L226 511 Z" fill="#0e7a0e"/></svg>
</body></html>
